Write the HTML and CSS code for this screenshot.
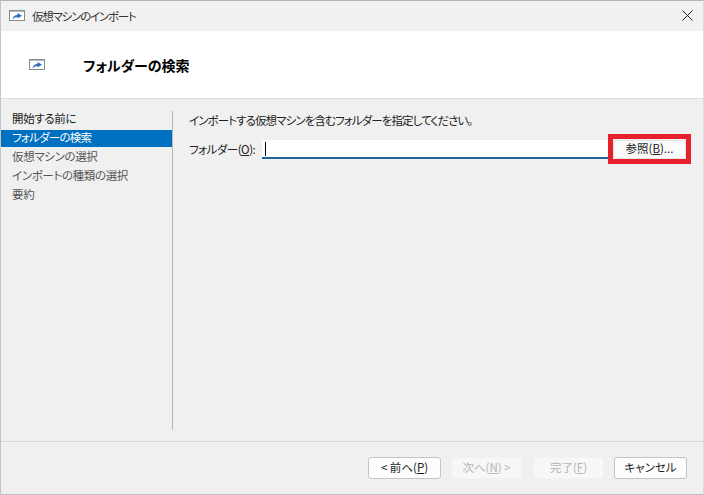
FILE: index.html
```html
<!DOCTYPE html>
<html lang="ja">
<head>
<meta charset="utf-8">
<title>仮想マシンのインポート</title>
<link rel="stylesheet" href="styles.css">
</head>
<body>
<svg class="defs" width="0" height="0" aria-hidden="true">
  <symbol id="import-icon" viewBox="0 0 16 11">
    <rect x="0.5" y="0.5" width="15" height="10" fill="#fff" stroke="#858b92"/>
    <rect x="1" y="1" width="14" height="1" fill="#b4bdc8"/>
    <path d="M3.5 9.5 C3.8 6.8 5.8 5 8.5 5 V3 L13 5.8 L8.5 8.6 V7 C6.5 7 5 7.8 3.5 9.5 Z" fill="#2a6db8"/>
  </symbol>
</svg>
<div class="window">
  <div class="titlebar">
    <svg class="title-icon"><use href="#import-icon"/></svg>
    <span class="title-text">仮想マシンのインポート</span>
    <svg class="close" viewBox="0 0 11 11"><path d="M0.5 0.5 L10.5 10.5 M10.5 0.5 L0.5 10.5" stroke="#222" stroke-width="1" fill="none"/></svg>
  </div>
  <header class="header">
    <svg class="header-icon"><use href="#import-icon"/></svg>
    <h1 class="header-title">フォルダーの検索</h1>
  </header>
  <main class="main">
    <nav class="steps">
      <div class="step step-first">開始する前に</div>
      <div class="step step-active">フォルダーの検索</div>
      <div class="step">仮想マシンの選択</div>
      <div class="step">インポートの種類の選択</div>
      <div class="step">要約</div>
    </nav>
    <section class="content">
      <p class="prompt">インポートする仮想マシンを含むフォルダーを指定してください。</p>
      <div class="folder-row">
        <label class="folder-label">フォルダー(<u>O</u>):</label>
        <div class="folder-input"><span class="caret"></span></div>
        <button class="btn btn-browse">参照(<u>B</u>)...</button>
      </div>
      <div class="highlight"></div>
    </section>
  </main>
  <footer class="footer">
    <button class="btn btn-prev">&lt; 前へ(<u>P</u>)</button>
    <button class="btn btn-next" disabled>次へ(<u>N</u>) &gt;</button>
    <button class="btn btn-finish" disabled>完了(<u>F</u>)</button>
    <button class="btn btn-cancel">キャンセル</button>
  </footer>
</div>
</body>
</html>
```
FILE: styles.css
```css
* { box-sizing: border-box; }
html, body { margin: 0; height: 100%; background: #fff; }
body { overflow: hidden; font-family: "Noto Sans CJK JP", "Noto Sans", sans-serif; font-size: 11.5px; color: #1a1a1a; font-feature-settings: "palt"; }
.defs { position: absolute; }
.window {
  width: 704px; height: 495px;
  display: flex; flex-direction: column;
  background: #f0f0f0;
  border-top: 1px solid #b4b4b4;
  border-left: 1px solid #c4c4c4;
  border-bottom: 1px solid #c0c0c0;
  border-right: 1px solid #dcdcdc;
}
.titlebar { height: 30px; display: flex; align-items: center; padding-left: 8px; padding-right: 10px; padding-bottom: 1px; background: #f1f1f1; flex: none; }
.title-icon { width: 16px; height: 11px; margin-right: 7px; flex: none; }
.title-text { font-size: 11.5px; letter-spacing: -1.2px; color: #333; white-space: nowrap; }
.close { width: 11px; height: 11px; margin-left: auto; }
.header { height: 68px; flex: none; display: flex; align-items: center; padding-left: 28px; background: #fff; border-bottom: 1px solid #dedede; }
.header-icon { width: 16px; height: 11px; flex: none; margin-right: 38px; }
.header-title { margin: 0; font-size: 14px; font-weight: 700; color: #000; white-space: nowrap; }
.main { flex: 1; display: flex; padding-top: 12px; min-height: 0; }
.steps { width: 172px; height: 319px; flex: none; border-right: 1px solid #b9b9b9; }
.step { height: 19px; line-height: 15px; padding-left: 11px; color: #555; white-space: nowrap; letter-spacing: -0.35px; }
.step-first { color: #1a1a1a; }
.step-active { height: 17px; margin-bottom: 2px; background: #0070c0; color: #fff; letter-spacing: -0.75px; }
.content { flex: 1; position: relative; padding: 0 13px 0 16px; }
.prompt { margin: 0; height: 29px; line-height: 19px; color: #222; white-space: nowrap; letter-spacing: -0.9px; }
.folder-row { display: flex; height: 19px; align-items: stretch; }
.folder-label { width: 73px; flex: none; line-height: 18px; color: #222; white-space: nowrap; letter-spacing: -0.5px; }
.folder-input { width: 346px; flex: none; background: #fff; border-bottom: 2px solid #1d659c; padding: 2px 0 0 3px; }
.caret { display: block; width: 1px; height: 14px; background: #000; }
.btn {
  font: inherit; font-size: 11.5px; color: #1a1a1a; padding: 0 0 1px; line-height: 1; white-space: nowrap;
  background: #fdfdfd; border: 1px solid #c4c4c4; border-radius: 3px;
}
.btn-browse { width: 73px; margin-left: 5px; background: #fbfbfb; border-color: #e4e4e4; }
.highlight { position: absolute; left: 435px; top: 23px; width: 83px; height: 30px; border: 5px solid #e8202e; pointer-events: none; }
.footer { height: 53px; flex: none; border-top: 1px solid #d8d8d8; display: flex; align-items: flex-start; padding: 15px 0 0 367px; }
.footer .btn { height: 22px; }
.btn-prev { width: 73px; }
.btn-next { width: 71px; margin-left: 10px; }
.btn-finish { width: 71px; margin-left: 11px; }
.btn-cancel { width: 73px; margin-left: 10px; }
.btn:disabled { background: #f7f7f7; border-color: #f2f2f2; color: #b5b5b5; }
```
